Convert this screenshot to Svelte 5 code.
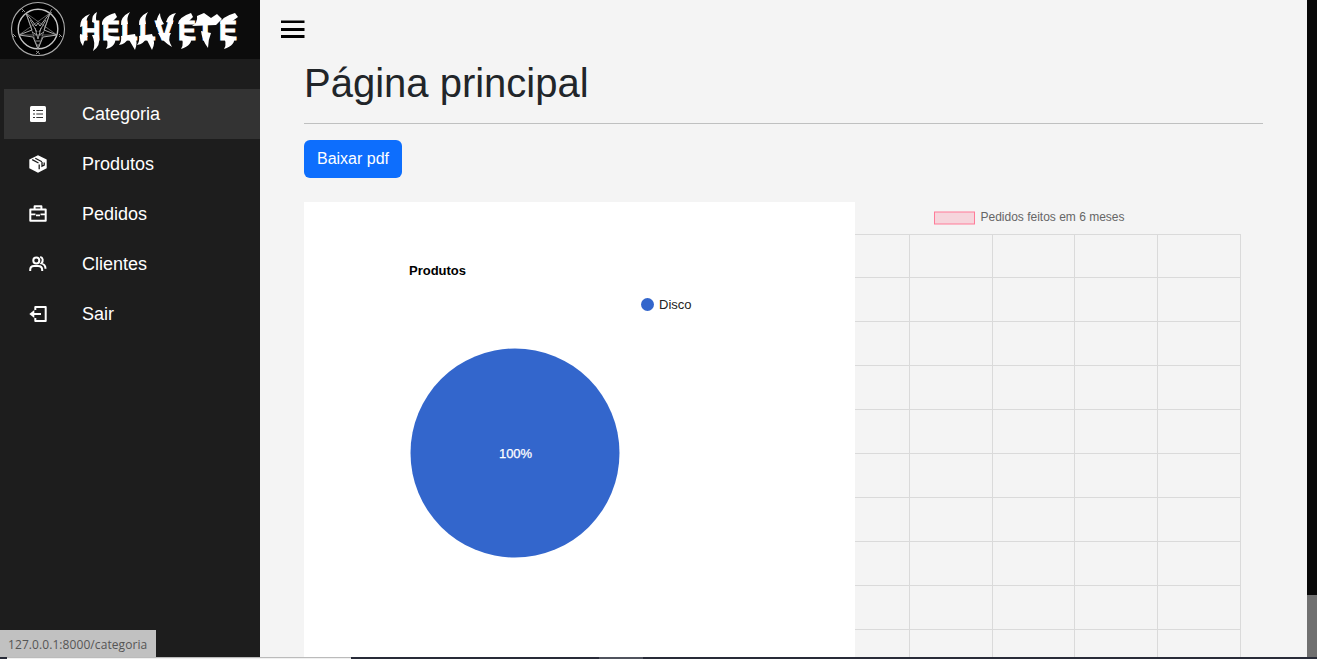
<script>
  const items = ['Categoria', 'Produtos', 'Pedidos', 'Clientes', 'Sair'];
  const columns = [909.5, 992.5, 1074.5, 1157.5, 1240.5].map((x) => x - 855);
  const rows = [234.5, 277.5, 321.5, 365.5, 409.5, 453.5, 497.5, 541.5, 585.5, 629.5].map((y) => y - 202);
</script>

<div class="screen">
  <div class="window">
    <aside>
      <header>
        <svg class="emblem" viewBox="0 0 56 56" fill="none" stroke="#aaa">
          <circle cx="28" cy="28" r="26.5" fill="#000" stroke-width="1.1" />
          <circle cx="28" cy="28" r="19.8" stroke="#c4c4c4" stroke-width="1.4" />
          <path d="M28 48 L16 12 L47 34 H9 L40 12 Z" stroke="#888" stroke-width=".7" />
          <path d="M16 12 L26 25 L28 22 L30 25 L40 12 L34 29 L47 34 L33 36 L28 48 L23 36 L9 34 L22 29Z" stroke-width="1" />
          <path d="M25 27L28 38L31 27M22 31L27 34M34 31L29 34M26 40H30M27 44H29M20 19L27 31M36 19L29 31" stroke-width=".9" />
          <path d="M12 8l3 3m-3 0l2-2M42 8l-2 3 2 1M3 33l3 3m-3 0l2-2M49 33l3 3m-3 0l2-2M26 50l4 3m-4 0l3-3" stroke-width=".8" />
        </svg>
        <svg class="wordmark" viewBox="0 0 170 59" fill="#fff">
          <text y="40" x="9 30 49 67 83 106 125 147">HELLVETE</text>
          <path d="M8 27Q8 17 18 14Q13 19 15 25ZM20 22Q20 14 25 12Q23 18 25 24ZM30 25Q29 17 43 13L45 17L40 22ZM49 25Q48 17 58 12Q54 18 56 24ZM67 25Q66 17 76 12Q72 18 74 24ZM84 27Q84 18 88 13Q88 18 92 24ZM94 22Q96 14 104 13Q100 18 101 24ZM106 24Q107 17 119 13L121 17L116 22ZM120 26Q126 23 125 16L132 13L139 18L145 14L150 19L144 25ZM148 24Q149 17 163 13L166 17L159 22Z" />
          <path d="M8 34Q7 41 11 46Q12 40 16 36ZM20 35Q24 43 21 51Q29 46 27 35ZM32 34Q38 43 34 49Q45 46 43 37ZM49 36Q50 41 47 45Q54 44 56 38L63 50Q66 43 63 34ZM67 36Q68 41 65 45Q72 44 74 38L80 50Q84 43 80 34ZM86 33Q91 42 100 47Q95 39 99 33ZM108 34Q113 43 109 49Q121 45 119 37ZM129 31Q130 40 136 48Q136 40 139 33ZM150 34Q156 43 152 49Q164 45 162 37Z" />
        </svg>
      </header>
      <nav>
        {#each items as item, index}
          <a href={`/${item.toLowerCase()}`} class:active={index === 0}>
            <svg class="icon" viewBox="0 0 20 20" fill="none" stroke="#fff" stroke-width="2">
              {#if index === 0}
                <rect x="2" y="2" width="16" height="16" rx="1.5" fill="#fff" stroke="none" />
                <path d="M5 6.5h2m1.3 0H15M5 10h2m1.3 0H15M5 13.5h2m1.3 0H15" stroke="#333" stroke-width="1.2" />
              {:else if index === 1}
                <path d="M10 1.2L18.7 5.5V14.3L10 18.8L1.3 14.3V5.5Z" fill="#fff" stroke="none" />
                <path d="M4.2 5.7L10.5 9M7.3 4.2l6.6 3.5M11.2 10.5v4.7M14 8v4.2l2.2-1.2V8.5" stroke="#1d1d1d" stroke-width="1.3" />
              {:else if index === 2}
                <path d="M2.3 5.6h15.4v11.2H2.3zM6.6 5.6V2.3h6.8v3.3" stroke-linejoin="round" />
                <path d="M2 10.4h5.5m5 0H18M8 11.3h4" stroke-width="1.7" />
              {:else if index === 3}
                <circle cx="8.3" cy="6.5" r="3" />
                <path d="M2.2 17v-1c0-3 1.8-4 3.8-4h4c2 0 4.2 1 4.2 4v1M12.2 3c2.7.4 3.5 3.7 1.2 6.4 3 .8 4.1 2.6 4.1 5.4" />
              {:else}
                <path d="M7.3 6V3H17.7v14H7.3V14M3.5 10H13" stroke-linejoin="round" />
                <path d="M1.3 10l5-4v8Z" fill="#fff" stroke="none" />
              {/if}
            </svg>
            <span>{item}</span>
          </a>
        {/each}
      </nav>
    </aside>

    <main>
      <div class="toolbar">
        <svg viewBox="0 0 24 20" aria-label="Menu"><path d="M0 .5h23.5V3H0zM0 8h23.5v3H0zM0 15h23.5v3H0z" /></svg>
      </div>
      <section>
        <h1>Página principal</h1>
        <hr />
        <button>Baixar pdf</button>
        <div class="charts">
          <svg class="pie" width="551" height="456" viewBox="0 0 551 456">
            <rect width="551" height="456" fill="#fff" />
            <text x="105" y="73" font-weight="bold" textLength="57">Produtos</text>
            <circle cx="343.5" cy="102.5" r="6.5" fill="#36c" />
            <text x="355" y="107" fill="#222" textLength="32.5">Disco</text>
            <circle cx="211" cy="251" r="104.5" fill="#36c" />
            <text x="195" y="256" fill="#fff" stroke="#fff" stroke-width=".25" textLength="33">100%</text>
          </svg>
          <svg class="orders" width="408" height="456" viewBox="0 0 408 456">
            <rect x="79.5" y="10" width="40" height="12" fill="#f6d5dc" stroke="#ff7b98" />
            <text x="125.5" y="19" fill="#666" textLength="144">Pedidos feitos em 6 meses</text>
            {#each columns as x}
              <line x1={x} x2={x} y1="32" y2="456" />
            {/each}
            {#each rows as y}
              <line x1="0" x2="386" y1={y} y2={y} />
            {/each}
          </svg>
        </div>
      </section>
    </main>
    <div class="scrollbar"><div></div></div>
  </div>
  <footer><span class="edge"></span><span class="preview"></span><span class="tasks"></span><span class="task"></span><span class="rest"></span></footer>
  <div class="address">127.0.0.1:8000/categoria</div>
</div>

<style>
  :global(body) { margin: 0; overflow: hidden; }
  .screen { position: relative; width: 1317px; height: 659px; overflow: hidden; display: flex; flex-direction: column; font-family: "Liberation Sans", Arial, sans-serif; background: #f4f4f4; }
  .window { display: flex; height: 657px; overflow: hidden; flex: none; }
  aside { width: 260px; background: #1d1d1d; flex: none; }
  header { height: 59px; background: #0c0c0c; display: flex; }
  .emblem { width: 56px; height: 56px; margin: 1px 0 0 10px; flex: none; }
  .wordmark { width: 170px; height: 59px; margin-left: 6px; flex: none; }
  .wordmark text { font: bold 27px "Liberation Sans", sans-serif; stroke: #fff; stroke-width: 1px; }
  nav { padding-top: 30px; }
  nav a { display: flex; align-items: center; height: 50px; margin-left: 4px; color: #fff; text-decoration: none; font-size: 18px; }
  nav a.active { background: #333; }
  .icon { width: 20px; height: 20px; margin-left: 24px; margin-right: 34px; flex: none; }
  main { flex: 1; min-width: 0; }
  .toolbar { height: 59px; padding: 20px 0 0 21px; box-sizing: border-box; }
  .toolbar svg { width: 24px; height: 20px; display: block; }
  section { padding: 0 44px; }
  h1 { font-size: 40px; line-height: 48px; font-weight: 400; margin: 0; color: #212529; }
  hr { border: 0; height: 1px; background: #bfc0c0; margin: 16px 0; }
  button { display: block; width: 98px; height: 38px; padding: 0 0 1px; border: 0; border-radius: 6px; background: #0d6efd; color: #fff; font: 16px "Liberation Sans", Arial, sans-serif; }
  .charts { display: flex; margin-top: 24px; }
  .charts svg { display: block; flex: none; }
  .pie text { font-size: 13px; }
  .orders text { font-size: 12px; }
  .orders line { stroke: #dadada; }
  .scrollbar { width: 10px; background: #080808; display: flex; align-items: flex-end; }
  .scrollbar div { width: 10px; height: 62px; background: #707070; }
  footer { height: 2px; display: flex; background: #282b38; }
  .edge { width: 7px; }
  .preview { width: 344px; background: #f0f0f0; border-top: 1px solid #bbb; box-sizing: border-box; }
  .tasks { width: 248px; }
  .task { width: 44px; background: #50535e; }
  .rest { flex: 1; }
  .address { position: absolute; left: 0; bottom: 2px; width: 156px; height: 27px; box-sizing: border-box; padding: 7px 0 0 8px; background: #c1c1c1; color: #555; font: 12px/16px "Open Sans", sans-serif; letter-spacing: .08px; white-space: nowrap; }
</style>
